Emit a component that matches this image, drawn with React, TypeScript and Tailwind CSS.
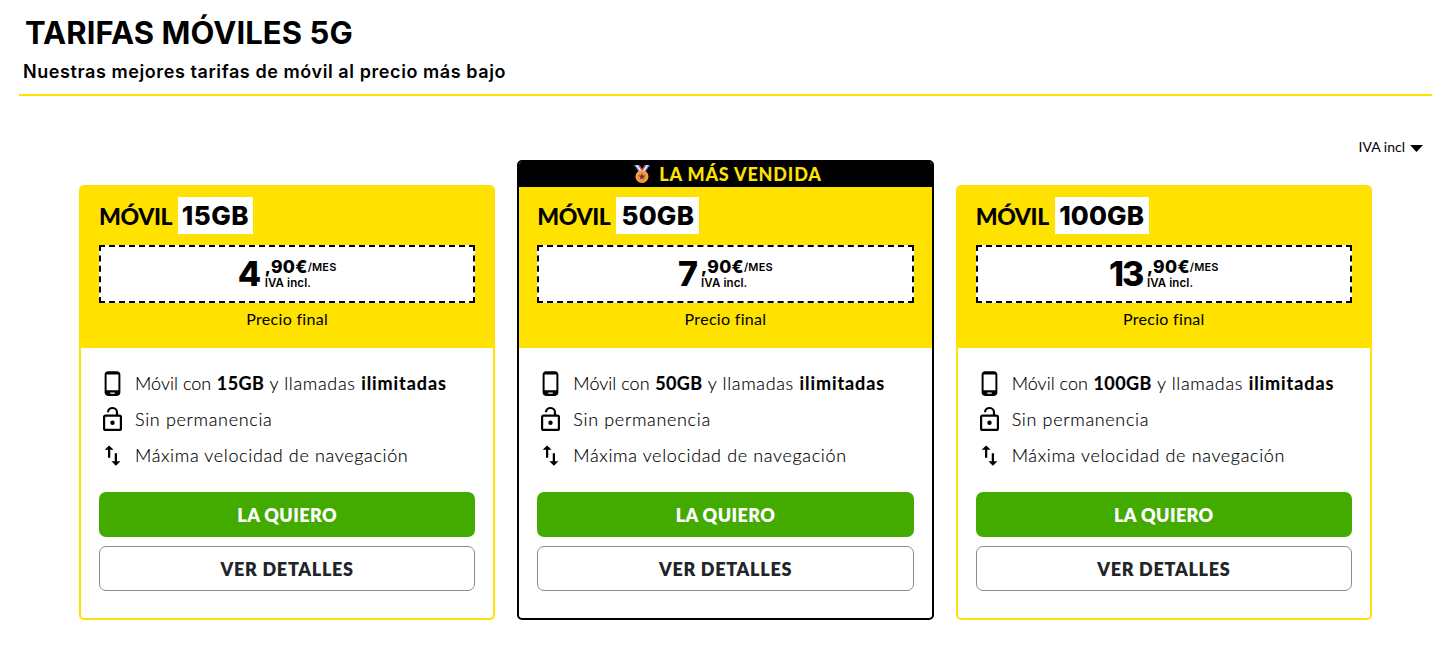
import { MdPhoneAndroid, MdSwapVert } from "react-icons/md";

type Plan = {
  data: string;
  dataClass: string;
  price: string;
  priceClass: string;
  best?: boolean;
};

const plans: Plan[] = [
  { data: "15GB", dataClass: "w-[75px] tracking-[0.5px]", price: "4", priceClass: "w-[27px] tracking-[-0.5px]" },
  { data: "50GB", dataClass: "w-[83px] tracking-[0.2px]", price: "7", priceClass: "w-[23px] tracking-[-0.5px]", best: true },
  { data: "100GB", dataClass: "w-[94px] tracking-[0.1px]", price: "13", priceClass: "w-[38px] tracking-[-1.9px]" },
];

function Medal() {
  return (
    <svg width="18" height="20" viewBox="0 0 18 20" aria-hidden="true">
      <path d="M1 1h5l5 7-3.500 2z" fill="#5b9bea" />
      <path d="M3 1h2l4.500 7-1.500 1z" fill="#f4f4f8" />
      <path d="M4.800 1H6.400l4.600 6.500-1 1z" fill="#e0395c" />
      <path d="M17 1h-5L7.200 8l3.500 2z" fill="#5b9bea" />
      <path d="M15.200 1h-2L8.600 8l1.600 1z" fill="#f4f4f8" />
      <path d="M13.400 1H12L7.600 7.500l1 1z" fill="#e0395c" />
      <circle cx="9" cy="12.500" r="6.500" fill="#fba544" />
      <circle cx="9" cy="12.500" r="5" fill="#ee943f" />
      <path d="M9 9.200l1 2.200 2.400.2-1.800 1.600.5 2.300L9 14.300 6.900 15.500l.5-2.300-1.800-1.600 2.400-.2z" fill="#6b3a3a" />
    </svg>
  );
}

function OpenLock() {
  return (
    <svg width="27" height="27" viewBox="0 0 27 27" fill="none" stroke="currentColor" strokeWidth="2.200" aria-hidden="true">
      <rect x="5.100" y="9.600" width="16.800" height="14.300" rx="1.500" />
      <path d="M9 6.300a4.500 4.500 0 0 1 9 .4v3" />
      <circle cx="13.500" cy="16.800" r="2.200" fill="currentColor" stroke="none" />
    </svg>
  );
}

function PlanCard({ plan }: { plan: Plan }) {
  return (
    <article
      className={`flex flex-1 flex-col overflow-hidden rounded-[5px] border-2 bg-white ${
        plan.best ? "border-black" : "border-[#ffe200]"
      }`}
    >
      {plan.best && (
        <div className="flex h-[25px] justify-center gap-[8px] bg-black pl-[4px] text-[18px] leading-[24px] font-black tracking-[0.82px] text-[#ffe200]">
          <span className="pt-[2px]">
            <Medal />
          </span>
          LA MÁS VENDIDA
        </div>
      )}
      <div className="h-[161px] bg-[#ffe200] px-[18px] pt-[10px]">
        <div className="flex h-[37px] items-center gap-[6px]">
          <h2 className="w-[73px] pt-px text-[23px] leading-[38px] font-black tracking-[-0.4px]">MÓVIL</h2>
          <span
            className={`h-full bg-white text-center font-[Inter] text-[26px] leading-[37px] font-extrabold ${plan.dataClass}`}
          >
            {plan.data}
          </span>
        </div>
        <div className="mt-[11px] flex h-[58px] items-center justify-center border-2 border-dashed border-black bg-white font-[Inter]">
          <span className={`text-[34px] leading-[54px] font-extrabold ${plan.priceClass}`}>{plan.price}</span>
          <div className="flex flex-col">
            <span className="flex h-[18px] text-[17.5px] leading-[20px] font-extrabold tracking-[0.3px]">
              ,90€
              <span className="text-[11px] leading-[20px] font-semibold tracking-[0.2px]">/MES</span>
            </span>
            <span className="h-[16px] text-[11.5px] leading-[17px] font-semibold tracking-[0.1px]">IVA incl.</span>
          </div>
        </div>
        <p className="mt-[4px] text-center text-[16px] leading-[24px] tracking-[0.3px]">Precio final</p>
      </div>
      <div className="px-[18px] pt-[17px] pb-[27px]">
        <ul className="text-[18px] leading-[36px] font-light whitespace-nowrap">
          <li className="flex h-[36px] items-center gap-[9px]">
            <MdPhoneAndroid size={27} />
            <span className="tracking-[0.66px] [-webkit-text-stroke:0.15px]">
              <span className="tracking-[0.02px]">Móvil con</span> <b className="font-bold tracking-[0.42px]">{plan.data}</b> y
              llamadas <b className="font-bold tracking-[0.93px]">ilimitadas</b>
            </span>
          </li>
          <li className="flex h-[36px] items-center gap-[9px]">
            <OpenLock />
            <span className="tracking-[0.66px] [-webkit-text-stroke:0.15px]">Sin permanencia</span>
          </li>
          <li className="flex h-[36px] items-center gap-[9px]">
            <MdSwapVert size={27} />
            <span className="tracking-[0.64px] [-webkit-text-stroke:0.15px]">Máxima velocidad de navegación</span>
          </li>
        </ul>
        <button className="mt-[19px] block h-[45px] w-full rounded-[7px] bg-[#43ab00] pt-px text-[18px] leading-[44px] font-extrabold tracking-[0.4px] text-white">
          LA QUIERO
        </button>
        <button className="mt-[9px] block h-[45px] w-full rounded-[7px] border border-[#8c8c8c] bg-white pt-px text-[18px] leading-[42px] font-extrabold tracking-[0.7px] text-[#212529]">
          VER DETALLES
        </button>
      </div>
    </article>
  );
}

export default function App() {
  return (
    <main className="h-[661px] w-full overflow-hidden bg-white pt-[13px] pr-[20px] pl-[19px] font-[Lato,sans-serif] text-black">
      <header className="border-b-2 border-[#ffe200] font-[Inter]">
        <h1 className="pl-[6px] text-[31px] leading-[40px] font-bold tracking-[0.08px]">TARIFAS MÓVILES 5G</h1>
        <p className="h-[41px] pl-[4px] text-[18px] leading-[38px] font-semibold tracking-[0.58px]">
          Nuestras mejores tarifas de móvil al precio más bajo
        </p>
      </header>
      <div className="mt-[41px] flex h-[20px] items-center justify-end gap-[5px] pr-[9px] text-[14px] leading-[20px]">
        IVA incl
        <svg width="13" height="7" viewBox="0 0 13 7" className="mt-[2px]">
          <path d="M0 0h13L6.500 7z" />
        </svg>
      </div>
      <section className="mt-[3px] ml-[60px] flex w-[1293px] items-end gap-[22px]">
        {plans.map((plan) => (
          <PlanCard key={plan.data} plan={plan} />
        ))}
      </section>
    </main>
  );
}
